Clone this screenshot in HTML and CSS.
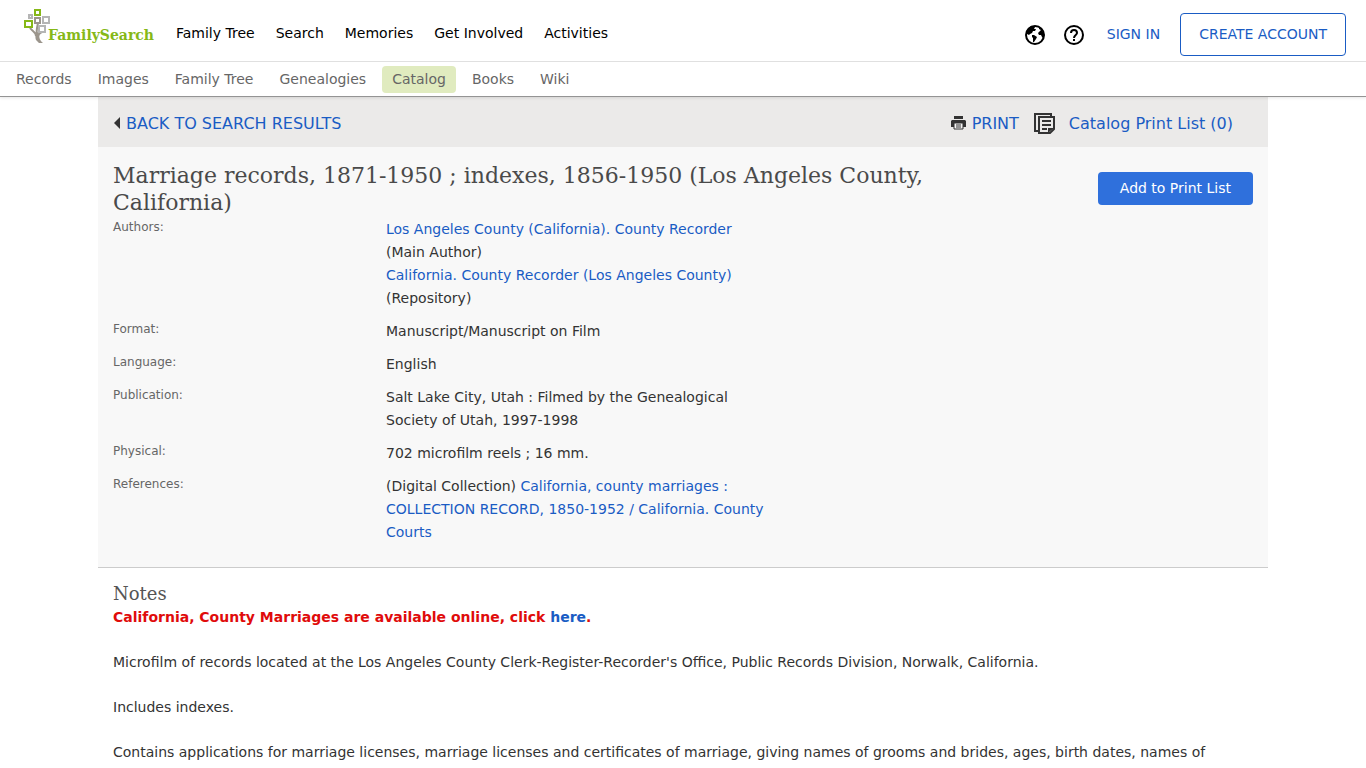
FILE: index.html
```html
<!DOCTYPE html>
<html lang="en">
<head>
    <meta charset="utf-8">
    <title>FamilySearch Catalog: Marriage records, 1871-1950</title>
    <link rel="stylesheet" href="styles.css">
</head>
<body>
    <header>
        <div class="top-bar">
            <a href="#" class="logo">
                <svg width="28" height="36" viewBox="0 0 28 36" fill="none">
                    <path d="M6 19c2 3 6 4 6 8M14 14c-1 5-2 8-1 12M18 23c-3 1-4 3-4 6" stroke="#9b958c" stroke-width="2"/>
                    <path d="M10 22c2 4 1 6 2 9l3 3h4c-3-2-4-5-4-9l-1-2-2 1z" fill="#9b958c"/>
                    <rect x="11" y="1" width="5" height="5" stroke="#86b817" stroke-width="2"/>
                    <rect x="5" y="6" width="3" height="3" stroke="#b5b5b5" stroke-width="2"/>
                    <rect x="11" y="9" width="5" height="5" fill="#fff" stroke="#9b958c" stroke-width="2"/>
                    <rect x="19" y="8" width="6" height="6" stroke="#b5b5b5" stroke-width="2"/>
                    <rect x="1" y="12" width="7" height="6" fill="#fff" stroke="#86b817" stroke-width="2"/>
                    <rect x="15" y="17" width="6" height="6" fill="#fff" stroke="#b5b5b5" stroke-width="2"/>
                </svg>
                <span class="logo-text">FamilySearch</span>
            </a>
            <nav class="main-nav">
                <a href="#">Family Tree</a>
                <a href="#">Search</a>
                <a href="#">Memories</a>
                <a href="#">Get Involved</a>
                <a href="#">Activities</a>
            </nav>
            <div class="account">
                <button type="button" class="icon-button" aria-label="Language">
                    <svg width="20" height="20" viewBox="0 0 20 20">
                        <circle cx="10" cy="10" r="9" fill="#fff" stroke="#000" stroke-width="2"/>
                        <path d="M2 6c1-3 3-5 6-5l2 1-1 2 2 0-1 2-2 0-1 2-2 1-1 1-2-1z" fill="#000"/>
                        <path d="M7 10l2 0 3 2-1 2-2 3-1 0 0-4-1-1z" fill="#000"/>
                        <path d="M14 2l3 3 2 4-1 4-1-1-1-2-2 0-1-2 2-2 1-1-2-1z" fill="#000"/>
                    </svg>
                </button>
                <button type="button" class="icon-button" aria-label="Help">
                    <svg width="20" height="20" viewBox="0 0 20 20" fill="none" stroke="#000" stroke-width="2">
                        <circle cx="10" cy="10" r="9"/>
                        <path d="M7 8c0-4 6-4 6 0 0 2-3 2-3 5"/>
                        <path d="M10 14v2"/>
                    </svg>
                </button>
                <a href="#" class="sign-in">SIGN IN</a>
                <a href="#" class="create-account">CREATE ACCOUNT</a>
            </div>
        </div>
        <nav class="sub-nav">
            <a href="#">Records</a>
            <a href="#">Images</a>
            <a href="#">Family Tree</a>
            <a href="#">Genealogies</a>
            <a href="#" class="active">Catalog</a>
            <a href="#">Books</a>
            <a href="#">Wiki</a>
        </nav>
    </header>

    <main>
        <div class="tool-bar">
            <a href="#" class="back">
                <svg width="6" height="12" viewBox="0 0 6 12"><path d="M6 0v12L0 6z" fill="#333"/></svg>
                BACK TO SEARCH RESULTS
            </a>
            <div class="tools">
                <a href="#" class="print">
                    <svg width="15" height="14" viewBox="0 0 15 14">
                        <path d="M3 0h9v3H3zM1 4h13l1 1v6H0V5z" fill="#333"/>
                        <path d="M3 7h9v6H3z" fill="#f4f4f4" stroke="#333"/>
                        <path d="M5 9h5M5 11h5" stroke="#333"/>
                    </svg>
                    PRINT
                </a>
                <a href="#" class="print-list">
                    <svg width="21" height="21" viewBox="0 0 21 21" fill="none" stroke="#333" stroke-width="2">
                        <path d="M4 18H1V1h16v2"/>
                        <path d="M5 4h15v12l-4 4H5z"/>
                        <path d="M8 8h9M8 12h9M8 16h5"/>
                        <path d="M14 20v-5h6z" fill="#333" stroke="none"/>
                    </svg>
                    Catalog Print List (0)
                </a>
            </div>
        </div>

        <section class="record">
            <div class="record-head">
                <h1>Marriage records, 1871-1950 ; indexes, 1856-1950 (Los Angeles County, California)</h1>
                <button type="button" class="add-button">Add to Print List</button>
            </div>
            <dl class="details">
                <dt>Authors:</dt>
                <dd>
                    <a href="#">Los Angeles County (California). County Recorder</a><br>(Main Author)<br>
                    <a href="#">California. County Recorder (Los Angeles County)</a><br>(Repository)
                </dd>
                <dt>Format:</dt>
                <dd>Manuscript/Manuscript on Film</dd>
                <dt>Language:</dt>
                <dd>English</dd>
                <dt>Publication:</dt>
                <dd>Salt Lake City, Utah : Filmed by the Genealogical Society of Utah, 1997-1998</dd>
                <dt>Physical:</dt>
                <dd>702 microfilm reels ; 16 mm.</dd>
                <dt>References:</dt>
                <dd>(Digital Collection) <a href="#">California, county marriages : COLLECTION RECORD, 1850-1952 / California. County Courts</a></dd>
            </dl>
        </section>

        <section class="notes">
            <h2>Notes</h2>
            <p class="notice">California, County Marriages are available online, click <a href="#">here</a>.</p>
            <p>Microfilm of records located at the Los Angeles County Clerk-Register-Recorder's Office, Public Records Division, Norwalk, California.</p>
            <p>Includes indexes.</p>
            <p>Contains applications for marriage licenses, marriage licenses and certificates of marriage, giving names of grooms and brides, ages, birth dates, names of</p>
        </section>
    </main>
</body>
</html>
```
FILE: styles.css
```css
* { box-sizing: border-box; }
body {
    margin: 0;
    background-color: #fff;
    color: #333;
    font-family: Verdana, "DejaVu Sans", sans-serif;
    font-size: 14px;
    line-height: 23px;
}
a { color: #1a5cc4; text-decoration: none; }
svg { display: block; flex: none; }

/* header */
header {
    position: relative;
    border-bottom: 1px solid #949494;
    box-shadow: 0 1px 3px rgba(0, 0, 0, 0.1);
}
.top-bar {
    display: flex;
    align-items: center;
    height: 62px;
    padding: 0 20px 0 24px;
    border-bottom: 1px solid #e0e0e0;
}
.logo { display: flex; align-items: flex-end; width: 132px; padding-bottom: 8px; }
.logo-text {
    margin-left: -4px;
    color: #86b817;
    font-family: "DejaVu Serif", serif;
    font-size: 14px;
    font-weight: bold;
    line-height: 20px;
}
.main-nav { display: flex; gap: 21px; margin-left: 20px; padding-top: 5px; }
.main-nav a { color: #000; }
.account { display: flex; align-items: center; margin-left: auto; padding-top: 8px; }
.icon-button {
    margin-right: 19px;
    padding: 0;
    border: none;
    background: none;
    cursor: pointer;
}
.sign-in { margin: 0 20px 0 4px; }
.create-account {
    padding: 9px 18px;
    border: 1px solid #1a5cc4;
    border-radius: 4px;
}
.sub-nav { display: flex; align-items: center; gap: 6px; height: 34px; padding: 0 6px; }
.sub-nav a { padding: 2px 10px; border-radius: 4px; color: #666; }
.sub-nav .active { background-color: #e0ebbf; }

/* page */
main { max-width: 1170px; margin: 0 auto; }
.tool-bar {
    display: flex;
    justify-content: space-between;
    align-items: center;
    height: 50px;
    padding: 2px 35px 0 16px;
    background-color: #ebeae9;
    font-size: 16px;
}
.tool-bar a { display: flex; align-items: center; gap: 6px; }
.tools { display: flex; gap: 15px; }
.tools .print-list { gap: 14px; }
.record {
    padding: 15px 15px 23px;
    border-bottom: 1px solid #ccc;
    background-color: #f8f8f8;
}
.record-head { display: flex; justify-content: space-between; align-items: flex-start; }
h1, h2 {
    margin: 0;
    font-family: "Museo Slab", "DejaVu Serif", serif;
    font-weight: normal;
}
h1 { max-width: 820px; font-size: 22px; line-height: 27px; color: #4a4a4a; }
h2 { font-size: 18px; line-height: 24px; color: #555; }
.add-button {
    margin-top: 10px;
    padding: 5px 22px;
    border: none;
    border-radius: 4px;
    background-color: #2f70dc;
    color: #fff;
    font: inherit;
    cursor: pointer;
}
.details {
    display: grid;
    grid-template-columns: 273px 390px;
    row-gap: 10px;
    margin: 2px 0 0;
}
.details dt { color: #666; font-size: 12px; line-height: 18px; }
.details dd { margin: 0; }
.notes { padding: 14px 15px 0; }
.notes p { margin: 0 0 23px; line-height: 22px; }
.notes .notice { color: #e00b0b; font-weight: bold; }
```
